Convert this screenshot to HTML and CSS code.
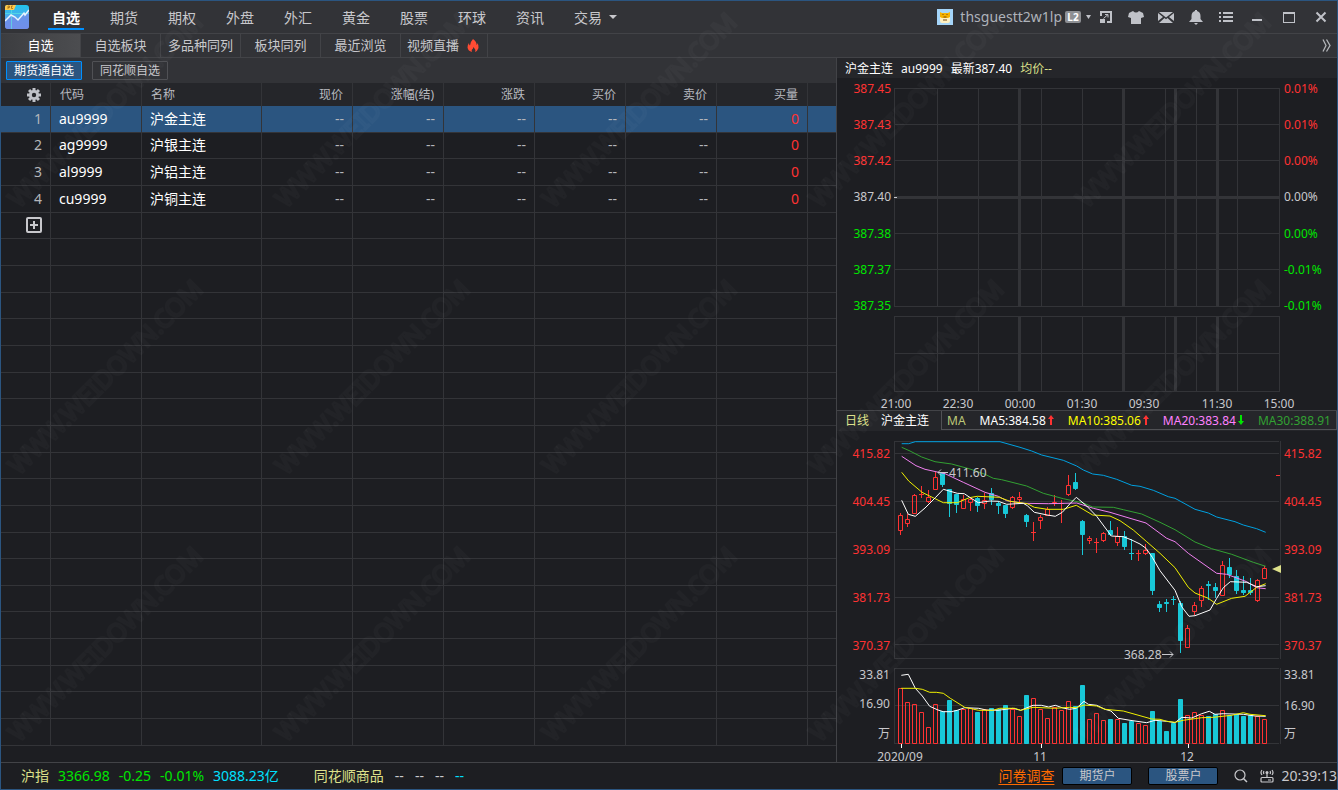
FILE: index.html
```html
<!DOCTYPE html>
<html lang="zh-CN">
<head>
<meta charset="utf-8">
<title>期货通</title>
<link rel="stylesheet" href="styles.css">
</head>
<body>
<div class="app">
  <header class="topbar">
    <svg class="logo" viewBox="0 0 24 24" aria-hidden="true">
      <defs><linearGradient id="lg" x1="0" y1="0" x2="0" y2="1"><stop offset="0" stop-color="#20c4ea"/><stop offset="1" stop-color="#7b8ff0"/></linearGradient></defs>
      <rect width="24" height="24" rx="3" fill="url(#lg)"/>
      <path d="M0 16l6-6 5 3 2 2 6-6 2-1 3-3v16q0 3-3 3H3q-3 0-3-3z" fill="#6f8fe8" opacity=".8"/>
      <path d="M0 8.500h24M6.500 3v21" stroke="#5af0e0" opacity=".6"/>
      <path d="M0 16l6-6 4 2 3 3 6-7 1 2 4-5" fill="none" stroke="#e8f4ff" stroke-width="1.500"/>
      <path d="M2 0h9l-2 5H0V2q0-2 2-2z" fill="#ffc94a"/>
      <path d="M3 4V1h1.500v1.500H3M8 1H6.500v2.500H8" fill="none" stroke="#946012" stroke-width=".7"/>
    </svg>
    <nav class="nav">
      <a class="nav-item active" href="#">自选</a>
      <a class="nav-item" href="#">期货</a>
      <a class="nav-item" href="#">期权</a>
      <a class="nav-item" href="#">外盘</a>
      <a class="nav-item" href="#">外汇</a>
      <a class="nav-item" href="#">黄金</a>
      <a class="nav-item" href="#">股票</a>
      <a class="nav-item" href="#">环球</a>
      <a class="nav-item" href="#">资讯</a>
      <a class="nav-item" href="#">交易</a>
      <svg class="caret" viewBox="0 0 8 4" aria-hidden="true"><path d="M0 0h8L4 4z"/></svg>
    </nav>
    <button class="user">
      <svg class="avatar" viewBox="0 0 16 16" aria-hidden="true"><rect width="16" height="16" fill="#a5d5f8"/><rect x="3" y="5" width="10" height="9" rx="2" fill="#fff0c0"/><path d="M3 3l2 1h6l2-1v5l-2 1H5L3 8z" fill="#f5b100"/><path d="M6 5v1M10 5v1M6.500 8h3M6 11h4" stroke="#7a4a12"/></svg>
      <span>thsguestt2w1lp</span>
      <b class="level">L2</b>
      <svg class="user-caret" viewBox="0 0 5 4" aria-hidden="true"><path d="M0 0h5L2.500 4z"/></svg>
    </button>
    <div class="tools">
      <button aria-label="小窗"><svg viewBox="0 0 16 16"><path d="M2 2h12v12H9v-2h3V4H4v3H2z"/><path d="M2 10h5v4H2z"/><path d="M5.500 9.500L10 5.500M7 5.500h3v3" fill="none" stroke="#c0c2c8"/></svg></button>
      <button aria-label="皮肤"><svg viewBox="0 0 16 16"><path d="M5 2q3 3 6 0l4 2 1 4-3 1v6H3V9L0 8l1-4z"/></svg></button>
      <button aria-label="邮件"><svg viewBox="0 0 16 16"><path d="M1 3h14L8 8.500zM0 4l5 4-5 4zM16 4l-5 4 5 4zM1 14l5.500-5L8 10.300 9.500 9l5.500 5z"/></svg></button>
      <button aria-label="提醒"><svg viewBox="0 0 16 16"><path d="M7 1h2v1q3.500 1 3.500 5v3l2.500 3H1l2.500-3V7Q3.500 3 7 2zM6 14h4l-2 2z"/></svg></button>
      <button aria-label="菜单"><svg viewBox="0 0 16 16"><path d="M1 3h2v2H1zM5 3h10v2H5zM1 7h2v2H1zM5 7h10v2H5zM1 11h2v2H1zM5 11h10v2H5z"/></svg></button>
    </div>
    <div class="window-buttons">
      <button aria-label="最小化"><svg viewBox="0 0 16 16"><path d="M3 10h10v2H3z"/></svg></button>
      <button aria-label="最大化"><svg viewBox="0 0 16 16"><path d="M2 3h12v11H2zM3 5v8h10V5z" fill-rule="evenodd"/></svg></button>
      <button aria-label="关闭"><svg viewBox="0 0 16 16"><path d="M3.500 3.500l9 9M12.500 3.500l-9 9" stroke="#c0c2c8" stroke-width="2"/></svg></button>
    </div>
  </header>

  <nav class="tabs">
    <a class="tab active" href="#">自选</a>
    <a class="tab" href="#">自选板块</a>
    <a class="tab" href="#">多品种同列</a>
    <a class="tab" href="#">板块同列</a>
    <a class="tab" href="#">最近浏览</a>
    <a class="tab live" href="#">视频直播<svg viewBox="0 0 12 13" aria-hidden="true"><path d="M6 0q4 3 3.500 6 1-.5.8-2Q12 6 11.500 9 10.500 12 8 13q1-2.500-1.500-5Q6 10 5 10.500 4.300 11.500 5 13 1 12 .5 8.500.5 5.500 2 4q0 2 1 2.500Q3.500 2.500 6 0z" fill="#ff4b33"/></svg></a>
    <button class="more" aria-label="更多"><svg viewBox="0 0 9 13"><path d="M1 .5l3 6-3 6M4.500.5l3.500 6-3.500 6" fill="none" stroke="#b4b6ba" stroke-width="1.300"/></svg></button>
  </nav>

  <div class="workspace">
    <main class="quotes">
      <div class="groups">
        <button class="group active">期货通自选</button>
        <button class="group">同花顺自选</button>
      </div>
      <div class="table-wrap">
        <table class="quote-table">
          <colgroup><col class="c-index"><col class="c-num"><col class="c-name"><col class="c-num"><col class="c-num"><col class="c-num"><col class="c-num"><col class="c-num"><col class="c-num"><col></colgroup>
          <thead>
            <tr>
              <th><button class="icon-button" aria-label="设置"><svg viewBox="0 0 14 14"><g fill="#c0c2c8"><path d="M5.500 0h3v14h-3zM0 5.500h14v3H0z"/><path d="M5.500 0h3v14h-3zM0 5.500h14v3H0z" transform="rotate(45 7 7)"/><circle cx="7" cy="7" r="5"/></g><circle cx="7" cy="7" r="2.200" fill="#25262a"/></svg></button></th>
              <th class="left">代码</th><th class="left">名称</th><th>现价</th><th>涨幅(结)</th><th>涨跌</th><th>买价</th><th>卖价</th><th>买量</th><th></th>
            </tr>
          </thead>
          <tbody id="quote-rows">
            <tr class="selected"><td>1</td><td class="left">au9999</td><td class="left">沪金主连</td><td>--</td><td>--</td><td>--</td><td>--</td><td>--</td><td class="up">0</td><td></td></tr>
            <tr><td>2</td><td class="left">ag9999</td><td class="left">沪银主连</td><td>--</td><td>--</td><td>--</td><td>--</td><td>--</td><td class="up">0</td><td></td></tr>
            <tr><td>3</td><td class="left">al9999</td><td class="left">沪铝主连</td><td>--</td><td>--</td><td>--</td><td>--</td><td>--</td><td class="up">0</td><td></td></tr>
            <tr><td>4</td><td class="left">cu9999</td><td class="left">沪铜主连</td><td>--</td><td>--</td><td>--</td><td>--</td><td>--</td><td class="up">0</td><td></td></tr>
            <tr><td><button class="icon-button add" aria-label="添加"><svg viewBox="0 0 16 16"><rect x="1" y="1" width="14" height="14" rx="1" fill="none" stroke="#c8c8cc" stroke-width="2"/><path d="M4 7h3V4h2v3h3v2H9v3H7V9H4z" fill="#c8c8cc"/></svg></button></td><td></td><td></td><td></td><td></td><td></td><td></td><td></td><td></td><td></td></tr>
          </tbody>
        </table>
      </div>
    </main>

    <aside class="charts">
      <div class="chart-head"><span>沪金主连</span><span>au9999</span><span>最新387.40</span><span class="khaki">均价--</span></div>
      <svg class="chart" id="trend" width="500" height="332" viewBox="837 78 500 332"></svg>
      <div class="ma-bar">
        <span class="khaki">日线</span><span>沪金主连</span>
        <div class="ma-box">
          <span class="ma-title">MA</span>
          <span class="ma">MA5:384.58<svg viewBox="0 0 6 10"><path d="M3 0l3 4H4v6H2V4H0z" fill="#ff3232"/></svg></span>
          <span class="ma yellow">MA10:385.06<svg viewBox="0 0 6 10"><path d="M3 0l3 4H4v6H2V4H0z" fill="#ff3232"/></svg></span>
          <span class="ma magenta">MA20:383.84<svg viewBox="0 0 6 10"><path d="M3 10l3-4H4V0H2v6H0z" fill="#00e600"/></svg></span>
          <span class="ma green">MA30:388.91</span>
        </div>
      </div>
      <svg class="chart" id="kline" width="500" height="331" viewBox="837 431 500 331"></svg>
    </aside>
  </div>

  <footer class="status">
    <div class="index">
      <span class="khaki">沪指</span><span class="down">3366.98</span><span class="down">-0.25</span><span class="down">-0.01%</span><span class="cyan">3088.23亿</span>
    </div>
    <div class="index goods">
      <span class="khaki">同花顺商品</span><span>--</span><span>--</span><span>--</span><span class="cyan">--</span>
    </div>
    <a class="survey" href="#">问卷调查</a>
    <button class="account">期货户</button>
    <button class="account">股票户</button>
    <button class="status-icon" aria-label="搜索"><svg viewBox="0 0 14 14"><circle cx="6" cy="6" r="5" fill="none" stroke="#c8c8cc" stroke-width="1.200"/><path d="M9.500 9.500l3.500 3.500" stroke="#c8c8cc" stroke-width="1.500"/></svg></button>
    <button class="status-icon" aria-label="网络"><svg viewBox="0 0 14 14"><path d="M2 8.500h10q1 0 1 1V12q0 1-1 1H2q-1 0-1-1V9.500q0-1 1-1zM7 4v5M2 1Q0 3.500 2 6M4 2Q3 3.500 4 5M12 1q2 2.500 0 5M10 2q1 1.500 0 3M8 11h3" fill="none" stroke="#c8c8cc" stroke-width="1.200"/><circle cx="7" cy="3.500" r="1.500" fill="#c8c8cc"/></svg></button>
    <time class="clock">20:39:13</time>
  </footer>

  <svg class="watermark" width="100%" height="100%" aria-hidden="true">
    <defs><pattern id="mark" width="267" height="267" patternUnits="userSpaceOnUse"><text transform="translate(18 208) rotate(-45)">WWW.WEIDOWN.COM</text></pattern></defs>
    <rect width="100%" height="100%" fill="url(#mark)"/>
  </svg>
</div>
<script src="charts.js"></script>
</body>
</html>
```
FILE: styles.css
```css
* { box-sizing: border-box; }
body {
  margin: 0;
  background: #1d1e22;
  color: #c8c8cc;
  font: 14px/20px "Noto Sans", "Noto Sans CJK SC", sans-serif;
}
button {
  margin: 0;
  padding: 0;
  border: 0;
  background: none;
  color: inherit;
  font: inherit;
}
a { color: inherit; text-decoration: none; }
svg { display: block; flex: none; }

.app {
  position: relative;
  display: flex;
  flex-direction: column;
  height: 100vh;
  border: 1px solid #2b5580;
  overflow: hidden;
}

/* title bar */
.topbar {
  display: flex;
  flex: none;
  height: 33px;
  background: #323337;
  border-bottom: 1px solid #424347;
}
.logo { width: 24px; height: 24px; margin: 4px 8px 0 4px; }
.nav { display: flex; flex: 1; }
.nav-item {
  position: relative;
  width: 58px;
  line-height: 34px;
  text-align: center;
}
.nav-item.active { color: #fff; font-weight: bold; }
.nav-item.active::after {
  content: "";
  position: absolute;
  left: 11px;
  right: 11px;
  bottom: 3px;
  height: 2px;
  background: #0090ff;
}
.caret { width: 8px; height: 4px; margin-top: 14px; margin-left: -8px; fill: #c8c8cc; }
.user { display: flex; align-items: center; color: #aeb2ba; }
.avatar { width: 16px; height: 16px; margin-right: 7px; }
.level {
  width: 16px;
  height: 12px;
  margin: 0 5px 0 3px;
  border-radius: 2px;
  background: #8e9094;
  color: #fff;
  font: bold 10px/12px "Noto Sans", sans-serif;
}
.user-caret { width: 5px; height: 4px; fill: #c0c2c8; }
.tools, .window-buttons { display: flex; }
.tools button, .window-buttons button { display: grid; place-items: center; width: 30px; }
.window-buttons button { width: 32px; }
.topbar button svg { fill: #c0c2c8; }
.tools svg, .window-buttons svg { width: 16px; height: 16px; }

/* page tabs */
.tabs {
  display: flex;
  flex: none;
  height: 24px;
  background: #323337;
  border-bottom: 1px solid #424347;
  font-size: 13px;
  line-height: 23px;
}
.tab { width: 80px; border-right: 1px solid #424347; text-align: center; }
.tab.active { background: linear-gradient(90deg, #3c3d40, #4c4d50); color: #fff; }
.tab.live { display: flex; align-items: center; gap: 8px; width: 87px; padding-left: 6px; }
.tab.live svg { width: 12px; height: 13px; }
.more { margin-left: auto; padding-right: 6px; }
.more svg { width: 9px; height: 13px; }

/* quotes */
.workspace { display: flex; flex: 1; min-height: 0; }
.quotes {
  display: flex;
  flex: 1;
  flex-direction: column;
  min-width: 0;
  border-right: 1px solid #424347;
}
.groups { display: flex; gap: 10px; flex: none; height: 25px; padding: 3px 5px; background: #323337; }
.group {
  width: 76px;
  height: 19px;
  border: 1px solid #505155;
  border-radius: 1px;
  font-size: 12px;
  line-height: 17px;
}
.group.active { background: #2b5580; border-color: #0090ff; color: #fff; }
.table-wrap { flex: 1; min-height: 0; padding-bottom: 16px; }
.quote-table {
  width: 100%;
  height: 100%;
  border-collapse: separate;
  border-spacing: 0;
  table-layout: fixed;
}
.c-index { width: 50px; }
.c-name { width: 120px; }
.c-num { width: 91px; }
.quote-table th, .quote-table td {
  padding: 0 8px;
  border-right: 1px solid #333438;
  text-align: right;
}
.quote-table th:last-child, .quote-table td:last-child { border-right: 0; }
.quote-table th {
  height: 23px;
  padding: 0 9px;
  background: #25262a;
  color: #b8bac0;
  font-size: 12px;
  font-weight: normal;
  line-height: 20px;
}
.quote-table td { height: 26px; border-bottom: 1px solid #333438; color: #b4b6ba; }
.quote-table .left { text-align: left; }
.quote-table td.left { color: #fff; }
.quote-table td.up { color: #ff3232; }
.quote-table .selected td { background: #2b5580; }
.icon-button { display: block; margin-left: auto; }
.icon-button svg { width: 14px; height: 14px; }
.icon-button.add svg { width: 16px; height: 16px; }

/* charts */
.charts { flex: none; width: 500px; font-size: 12px; color: #fff; }
.chart-head { display: flex; gap: 8px; height: 20px; padding-left: 8px; background: #25262a; line-height: 22px; }
.chart { font-size: 12px; overflow: visible; }
.grid { fill: #333438; }
.t-red { fill: #ff3232; }
.t-green { fill: #00e600; }
.t-gray { fill: #c8c8cc; }
.t-end { text-anchor: end; }
.t-mid { text-anchor: middle; }
.line { fill: none; stroke-width: 1; }
.candle-up { fill: none; stroke: #ff3232; }
.candle-down { fill: #18c8d8; stroke: #18c8d8; }
.ma-bar {
  display: flex;
  gap: 12px;
  height: 21px;
  padding-left: 8px;
  border-top: 1px solid #424347;
  background: #25262a;
}
.ma-box {
  display: flex;
  flex: 1;
  justify-content: space-between;
  height: 19px;
  padding: 0 5px;
  border: 1px solid #505155;
  border-top: 0;
  line-height: 19px;
}
.ma { display: flex; align-items: center; gap: 2px; }
.ma svg { width: 6px; height: 10px; }
.khaki { color: #dde08a; }
.ma-title { color: #bcc878; }
.yellow { color: #ff0; }
.magenta { color: #ff80ff; }
.green { color: #32a032; }
.down { color: #00e600; }
.cyan { color: #00e0ff; }

/* status bar */
.status {
  display: flex;
  flex: none;
  align-items: center;
  height: 27px;
  padding-left: 20px;
  border-top: 1px solid #424347;
}
.index { display: flex; gap: 9px; }
.goods { flex: 1; gap: 11px; margin-left: 35px; }
.survey { margin-right: 8px; color: #ff6a00; text-decoration: underline; text-underline-offset: 3px; }
.account {
  width: 70px;
  height: 18px;
  margin-right: 16px;
  border: 1px solid #000;
  border-radius: 2px;
  background: #2b5580;
  font-size: 12px;
  line-height: 16px;
}
.status-icon { margin: 0 12px 0 0; }
.status-icon + .clock { margin-left: -5px; }
.status-icon svg { width: 14px; height: 14px; }

.watermark { position: absolute; inset: 0; pointer-events: none; }
.watermark text {
  fill: none;
  stroke: #fff;
  stroke-width: 2;
  stroke-opacity: 0.025;
  font-size: 25px;
}
```
FILE: charts.js
```js
const COLS = 10;
const TOTAL_ROWS = 24;

const tbody = document.getElementById('quote-rows');
for (let i = tbody.rows.length; i < TOTAL_ROWS; i++) {
  const row = tbody.insertRow();
  for (let c = 0; c < COLS; c++) row.insertCell();
}

const rect = (x, y, w, h, cls) => `<rect class="${cls}" x="${x}" y="${y}" width="${w}" height="${h}"/>`;
const label = (x, y, text, cls) => `<text class="${cls}" x="${x}" y="${y}">${text}</text>`;

// Intraday trend: empty session grid with price and percentage axes
(function drawTrend() {
  let out = '';
  const sessions = [894, 937, 978, 1041, 1082, 1165, 1196, 1237, 1279];
  const breaks = [1018, 1122, 1174, 1216];
  for (const [top, height] of [[88, 219], [316, 76]]) {
    sessions.forEach(x => { out += rect(x, top, 1, height, 'grid'); });
    breaks.forEach(x => { out += rect(x, top, 3, height, 'grid'); });
  }
  [88, 124, 160, 233, 269, 306, 316, 353, 391].forEach(y => { out += rect(894, y, 386, 1, 'grid'); });
  out += rect(894, 196, 386, 3, 'grid') + rect(894, 197, 3, 1, 't-gray');
  [
    ['387.45', '0.01%', 'red'], ['387.43', '0.01%', 'red'], ['387.42', '0.00%', 'red'],
    ['387.40', '0.00%', 'gray'],
    ['387.38', '0.00%', 'green'], ['387.37', '-0.01%', 'green'], ['387.35', '-0.01%', 'green']
  ].forEach(([price, pct, color], i) => {
    const y = Math.floor(93 + i * 36.3);
    out += label(891, y, price, `t-${color} t-end`) + label(1284, y, pct, `t-${color}`);
  });
  [[896, '21:00'], [958, '22:30'], [1020, '00:00'], [1082, '01:30'], [1144, '09:30'], [1217, '11:30'], [1279, '15:00']]
    .forEach(([x, t]) => { out += label(x, 408, t, 't-gray t-mid'); });
  document.getElementById('trend').innerHTML = out;
})();

// Daily candles. Samples are kept in thirds of a pixel from each plot's origin.
(function drawKline() {
  const U = 3;
  const STEP = 7;
  const px = v => Math.round(v / U);
  let out = '';

  [441, 453, 501, 549, 597, 644, 658, 668, 705, 743].forEach(y => { out += rect(894, y, 385, 1, 'grid'); });
  [894, 1280].forEach(x => { out += rect(x, 441, 1, 218, 'grid') + rect(x, 668, 1, 76, 'grid'); });

  // [rising, body top, body bottom, high, low]
  const candles = [
    [1,240,287,234,300],[1,252,266,238,276],[1,180,236,177,236],[1,178,178,153,190],[1,186,201,165,204],
    [1,126,164,110,164],[0,112,150,112,156],[0,162,206,162,246],[0,177,210,177,234],[1,192,223,180,223],
    [1,192,204,186,228],[0,189,213,186,231],[1,196,207,174,222],[0,174,195,159,210],[0,204,213,198,237],
    [0,209,237,209,249],[1,186,220,183,222],[1,186,194,171,200],[0,240,261,237,276],[1,292,292,262,318],
    [1,246,258,240,282],[1,222,243,216,243],[1,202,208,180,214],[1,204,204,195,264],[1,150,180,120,183],
    [0,141,162,114,165],[0,258,300,255,360],[1,310,318,303,327],[1,320,320,309,354],[1,294,317,291,320],
    [0,285,300,258,303],[1,303,324,276,333],[0,303,336,288,345],[0,355,355,312,375],[1,355,355,345,378],
    [1,346,357,327,360],[0,354,468,354,480],[0,507,519,498,531],[0,500,507,492,531],[0,492,492,483,510],
    [0,504,618,498,654],[1,579,638,570,638],[1,510,530,501,540],[1,459,497,453,516],[0,447,453,438,495],
    [0,456,468,444,489],[1,390,482,378,484],[0,396,420,369,429],[0,423,468,405,477],[0,465,474,423,480],
    [0,465,474,429,480],[1,435,498,432,500],[1,399,431,393,432]
  ];
  const volumes = [
    100,142,148,172,217,148,168,136,165,162,160,171,163,159,163,150,162,184,120,129,163,190,155,166,139,153,90,
    193,175,196,192,193,204,198,203,211,168,198,228,204,132,181,172,180,183,177,166,180,178,183,180,183,193
  ];
  const risingDays = [0, 1, 2, 3, 4, 5, 9, 10, 12, 16, 17, 19, 20, 21, 22, 23, 24, 27, 28, 29, 31, 34, 35, 41, 42, 43, 46, 51, 52];

  candles.forEach(([up, top, bottom, high, low], i) => {
    const c = 900.5 + i * STEP;
    const t = 435 + px(top);
    const b = 435 + px(bottom);
    const h = 435 + px(high);
    const l = 435 + px(low);
    const cls = up ? 'candle-up' : 'candle-down';
    if (b === t) {
      out += `<path class="${cls}" d="M${c - 2.5} ${t + 0.5}h5M${c} ${h}V${l}"/>`;
    } else {
      out += `<path class="${cls}" d="M${c} ${h}V${t}M${c} ${b}V${Math.max(b, l)}M${c - 2} ${t + 0.5}h4V${b - 0.5}h-4z"/>`;
    }
  });

  volumes.forEach((v, i) => {
    const c = 900.5 + i * STEP;
    const cls = risingDays.includes(i) ? 'candle-up' : 'candle-down';
    out += `<path class="${cls}" d="M${c - 2} ${655.5 + px(v)}h4V743.500h-4z"/>`;
  });

  const line = (ox, oy, color, pts) => {
    const d = pts.trim().split(/\s+/).map(p => {
      const [x, y] = p.split(',').map(Number);
      return `${(ox + x / U).toFixed(1)},${(oy + y / U).toFixed(1)}`;
    }).join(' ');
    out += `<polyline class="line" stroke="${color}" points="${d}"/>`;
  };

  line(890, 435, '#00a0e0', '35,26 56,26 76,20 330,20 390,37 425,48 455,60 520,76 560,93 580,105 608,117 640,121 680,133 725,151 750,154 790,166 835,185 855,190 915,223 955,234 980,246 1035,260 1060,270 1100,281 1127,292');
  line(890, 435, '#32a032', '35,37 60,48 95,66 135,80 185,87 240,102 285,118 310,130 335,134 410,153 460,175 520,191 580,204 608,216 670,217 700,224 755,237 810,262 855,284 915,321 965,341 1025,358 1090,382 1127,394');
  line(890, 435, '#f080f0', '35,64 78,92 105,103 165,116 220,142 285,172 325,184 350,197 400,205 475,206 560,204 610,220 660,232 720,250 768,264 830,310 855,320 895,355 980,415 1010,418 1070,440 1100,458 1127,461');
  line(890, 435, '#f0f000', '35,112 56,138 96,172 160,203 202,203 238,188 262,184 328,187 360,199 412,206 433,217 472,223 520,223 559,211 608,240 660,243 690,257 730,285 770,320 810,355 855,398 895,457 915,474 955,490 980,508 1025,490 1065,484 1100,457 1127,446');
  line(890, 435, '#ffffff', '35,196 55,238 76,244 105,219 136,188 160,163 178,168 202,175 223,176 241,188 265,203 300,198 325,199 350,208 400,205 412,212 433,232 472,240 496,244 517,232 540,206 559,187 590,213 620,244 664,303 700,305 725,315 750,327 768,340 787,367 810,407 855,466 875,515 897,544 915,542 960,525 980,490 1000,458 1021,440 1070,442 1100,455 1127,452');

  line(838, 655, '#ffffff', '190,61 211,58 232,100 253,123 275,154 300,165 316,170 340,170 358,166 380,158 422,160 445,165 480,166 525,160 548,166 585,151 610,151 632,156 652,151 675,159 695,163 715,160 738,139 751,148 776,151 801,163 819,168 841,190 876,196 926,203 951,196 986,199 1011,203 1031,187 1061,189 1091,176 1114,169 1131,178 1156,176 1216,178 1251,183 1283,184');
  line(838, 655, '#f0f000', '190,100 232,100 253,103 275,112 295,112 316,115 337,130 380,157 422,166 465,166 485,160 530,160 548,166 585,157 650,160 695,157 715,158 738,150 776,153 801,163 856,168 941,192 966,193 986,199 1011,202 1036,196 1091,188 1126,187 1181,181 1216,173 1236,178 1283,182');

  ['415.82', '404.45', '393.09', '381.73', '370.37'].forEach((t, i) => {
    const y = 458 + i * 48;
    out += label(890, y, t, 't-red t-end') + label(1284, y, t, 't-red');
  });
  out += label(949, 477, '411.60', 't-gray') + label(1124, 659, '368.28', 't-gray');
  out += '<path d="M948 472.500h-10M941 469.500l-3 3 3 3M1162 654.500h11M1170 651.500l3 3-3 3" fill="none" stroke="#c8c8cc"/>';
  out += rect(1276, 475, 4, 1, 't-red') + '<path d="M1272 569l9-4v8z" fill="#dde08a"/>';

  out += label(890, 679, '33.81', 't-gray t-end') + label(890, 708, '16.90', 't-gray t-end') + label(890, 738, '万', 't-gray t-end');
  out += label(1284, 679, '33.81', 't-gray') + label(1284, 710, '16.90', 't-gray') + label(1284, 738, '万', 't-gray');
  [[901, 900, '2020/09'], [1041, 1040, '11'], [1188, 1187, '12']].forEach(([tick, x, t]) => {
    out += `<path d="M${tick + 0.5} 744v4" stroke="#fff"/>` + label(x, 761, t, 't-gray t-mid');
  });
  document.getElementById('kline').innerHTML = out;
})();
```
